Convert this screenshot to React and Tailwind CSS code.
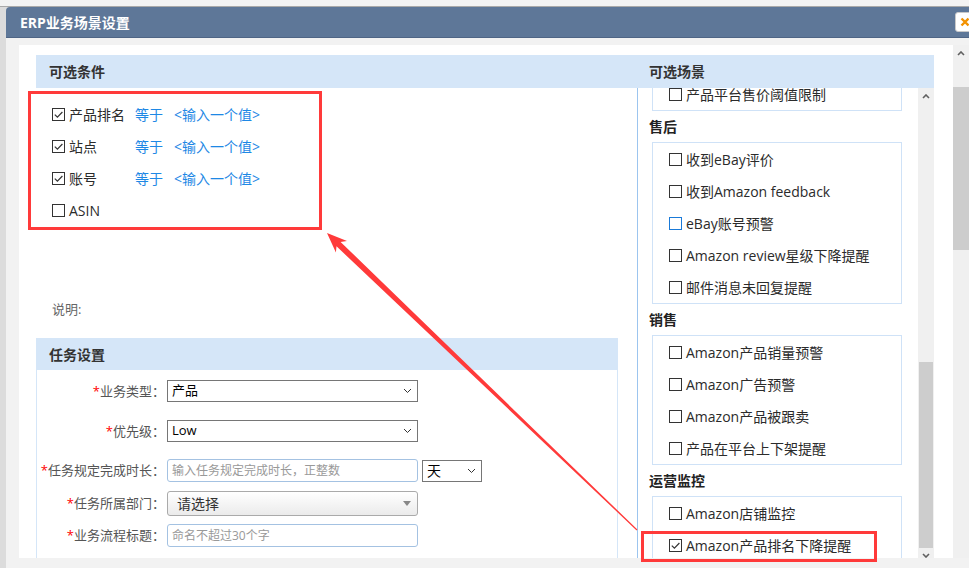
import React from "react";

// ERP scene settings dialog, with the red annotation boxes and arrow on top

const conditions = [
  { label: "产品排名", checked: true, op: true },
  { label: "站点", checked: true, op: true },
  { label: "账号", checked: true, op: true },
  { label: "ASIN", checked: false, op: false },
];

const groups = [
  {
    title: "售后",
    items: [
      { label: "收到eBay评价" },
      { label: "收到Amazon feedback" },
      { label: "eBay账号预警", blue: true },
      { label: "Amazon review星级下降提醒" },
      { label: "邮件消息未回复提醒" },
    ],
  },
  {
    title: "销售",
    items: [
      { label: "Amazon产品销量预警" },
      { label: "Amazon广告预警" },
      { label: "Amazon产品被跟卖" },
      { label: "产品在平台上下架提醒" },
    ],
  },
  {
    title: "运营监控",
    items: [{ label: "Amazon店铺监控" }, { label: "Amazon产品排名下降提醒", checked: true }],
  },
];

function Check({ checked, blue }) {
  return (
    <span
      className={`w-[13px] h-[13px] border shrink-0 bg-white flex items-center justify-center ${
        blue ? "border-[#1a7ad8]" : "border-[#333333]"
      }`}
    >
      {checked && (
        <svg viewBox="0 0 11 11" className="w-[11px] h-[11px]">
          <path d="M1.8 5.6l2.6 2.6 5-5.2" fill="none" stroke="#333" strokeWidth="1.2" />
        </svg>
      )}
    </span>
  );
}

function Chevron() {
  return (
    <svg viewBox="0 0 9 6" className="w-[9px] h-[6px]">
      <path d="M1 1l3.5 3.5L8 1" fill="none" stroke="#333" strokeWidth="1" />
    </svg>
  );
}

function Caret({ down }) {
  return (
    <svg viewBox="0 0 8 5" className="w-[8px] h-[5px]">
      <path d={down ? "M1 1l3 3 3-3" : "M1 4l3-3 3 3"} fill="none" stroke="#606060" strokeWidth="1.6" />
    </svg>
  );
}

function FormRow({ label, className, children }) {
  return (
    <div className={`flex items-center shrink-0 ${className}`}>
      <div className="w-[128px] flex justify-end whitespace-nowrap text-[13px] text-[#555] leading-none">
        <span className="text-[#ff0000]">*</span>
        {label}：
      </div>
      <div className="ml-[2px] flex items-center">{children}</div>
    </div>
  );
}

export default function App() {
  return (
    <div className="w-[969px] h-[568px] relative overflow-hidden bg-[#dcdcdc] font-['Segoe_UI','Open_Sans','Noto_Sans_CJK_SC',sans-serif] text-[#2b2b2b]">
      <div className="h-[7px] bg-[#f3f3f3] border-b border-[#a9a9a9]" />

      <div className="ml-[6px] flex flex-col">
        {/* title bar */}
        <div className="h-[31px] shrink-0 bg-[#5e7798] rounded-tl-[4px] border-b border-[#4f6585] flex items-center pl-[14px] overflow-hidden">
          <span className="text-white text-[14px] font-bold">ERP业务场景设置</span>
          <span className="ml-auto -mr-[8px] w-[22px] h-[20px] bg-white border border-[#c8c8c8] rounded-[3px] flex items-center pl-[4px]">
            <svg viewBox="0 0 10 10" className="w-[10px] h-[10px]">
              <path d="M1.5 1.5l7 7M8.5 1.5l-7 7" stroke="#f39200" strokeWidth="2.4" />
            </svg>
          </span>
        </div>

        {/* body */}
        <div className="h-[530px] shrink-0 bg-[#f2f2f2] pl-[13px] pt-[7px]">
          <div className="h-[513px] bg-white flex">
            <div className="w-[934px] pl-[17px] pt-[10px] flex">
              {/* left column */}
              <div className="w-[601px] flex flex-col overflow-hidden">
                <div className="h-[33px] shrink-0 bg-[#d5e6f8] pl-[13px] flex items-center text-[14px] font-bold text-[#333]">
                  可选条件
                </div>
                <div className="pt-[10px] shrink-0">
                  {conditions.map((c) => (
                    <div key={c.label} className="h-[32px] pl-[16px] flex items-center text-[14px]">
                      <Check checked={c.checked} />
                      <span className="ml-[4px] w-[66px]">{c.label}</span>
                      {c.op && (
                        <>
                          <span className="text-[#1e88e5] w-[39px]">等于</span>
                          <span className="text-[#1e88e5]">&lt;输入一个值&gt;</span>
                        </>
                      )}
                    </div>
                  ))}
                </div>
                <div className="mt-[70px] h-[28px] shrink-0 pl-[16px] flex items-center text-[13px] text-[#666]">说明:</div>

                <div className="mt-[14px] w-[582px] shrink-0">
                  <div className="h-[32px] bg-[#d5e6f8] pl-[13px] flex items-center text-[14px] font-bold text-[#333]">
                    任务设置
                  </div>
                  <div className="h-[200px] border-x border-[#d5e6f8] flex flex-col">
                    <FormRow label="业务类型" className="mt-[10px] h-[22px]">
                      <div className="w-[251px] h-[22px] border border-[#767676] flex items-center justify-between pl-[4px] pr-[5px] text-[13px] text-black">
                        产品
                        <Chevron />
                      </div>
                    </FormRow>
                    <FormRow label="优先级" className="mt-[18px] h-[22px]">
                      <div className="w-[251px] h-[22px] border border-[#767676] flex items-center justify-between pl-[4px] pr-[5px] text-[13px] text-black">
                        Low
                        <Chevron />
                      </div>
                    </FormRow>
                    <FormRow label="任务规定完成时长" className="mt-[17px] h-[23px]">
                      <div className="w-[251px] h-[23px] border border-[#a4c2e2] rounded-[3px] flex items-center pl-[4px] text-[12px] text-[#999]">
                        输入任务规定完成时长，正整数
                      </div>
                      <div className="ml-[4px] w-[60px] h-[22px] border border-[#767676] flex items-center justify-between pl-[4px] pr-[5px] text-[14px] text-black">
                        天
                        <Chevron />
                      </div>
                    </FormRow>
                    <FormRow label="任务所属部门" className="mt-[9px] h-[25px]">
                      <div className="w-[251px] h-[25px] border border-[#aaaaaa] rounded-[3px] bg-linear-to-b from-white to-[#ebebeb] flex items-center justify-between pl-[9px] pr-[6px] text-[14px] text-[#333]">
                        请选择
                        <svg viewBox="0 0 8 5" className="w-[8px] h-[5px]">
                          <path d="M0 0h8L4 5z" fill="#888" />
                        </svg>
                      </div>
                    </FormRow>
                    <FormRow label="业务流程标题" className="mt-[8px] h-[23px]">
                      <div className="w-[251px] h-[23px] border border-[#a4c2e2] rounded-[3px] flex items-center pl-[4px] text-[12px] text-[#999]">
                        命名不超过30个字
                      </div>
                    </FormRow>
                  </div>
                </div>
              </div>

              {/* right column */}
              <div className="w-[297px] flex flex-col">
                <div className="h-[33px] shrink-0 bg-[#d5e6f8] pl-[12px] flex items-center text-[14px] font-bold text-[#333]">
                  可选场景
                </div>
                <div className="h-[470px] shrink-0 flex">
                  <div className="w-[281px] border-l border-[#9cc5ef] overflow-hidden">
                    <div className="ml-[14px] w-[250px] -mt-[11px] border border-[#cfe2f7]">
                      <div className="h-[32px] pl-[16px] flex items-center text-[14px]">
                        <Check />
                        <span className="ml-[4px]">产品平台售价阈值限制</span>
                      </div>
                    </div>
                    {groups.map((g) => (
                      <div key={g.title}>
                        <div className="h-[31px] pl-[11px] flex items-center text-[14px] font-bold text-[#222]">{g.title}</div>
                        <div className="ml-[14px] w-[250px] border border-[#cfe2f7]">
                          {g.items.map((it) => (
                            <div key={it.label} className="h-[32px] pl-[16px] flex items-center text-[14px]">
                              <Check checked={it.checked} blue={it.blue} />
                              <span className="ml-[4px] whitespace-nowrap">{it.label}</span>
                            </div>
                          ))}
                        </div>
                      </div>
                    ))}
                  </div>
                  {/* inner scrollbar */}
                  <div className="w-[16px] bg-[#f0f0f0] flex flex-col">
                    <div className="h-[17px] shrink-0 flex items-center justify-center">
                      <Caret />
                    </div>
                    <div className="h-[257px] shrink-0" />
                    <div className="h-[186px] shrink-0 mx-[1px] bg-[#cdcdcd]" />
                    <div className="h-[10px] shrink-0 flex items-end justify-center">
                      <Caret down />
                    </div>
                  </div>
                </div>
              </div>
            </div>

            {/* outer scrollbar */}
            <div className="w-[16px] ml-[3px] bg-[#f0f0f0] flex flex-col">
              <div className="h-[17px] shrink-0 flex items-center justify-center">
                <Caret />
              </div>
              <div className="h-[25px] shrink-0" />
              <div className="h-[163px] shrink-0 bg-[#cdcdcd]" />
            </div>
          </div>
        </div>
      </div>

      {/* annotations */}
      <div className="absolute left-[28px] top-[91px] w-[294px] h-[139px] border-[3px] border-[#ff3a3a]" />
      <div className="absolute left-[641px] top-[531px] w-[236px] h-[31px] border-[3px] border-[#ff3a3a]" />
      <svg className="absolute left-0 top-0 w-[969px] h-[568px] pointer-events-none" viewBox="0 0 969 568">
        <polygon
          points="327,233 347,241 340.6,241.9 637.4,529.6 636.6,530.4 336.5,246.3 335.9,252.6"
          fill="#ff3a3a"
        />
      </svg>
    </div>
  );
}
